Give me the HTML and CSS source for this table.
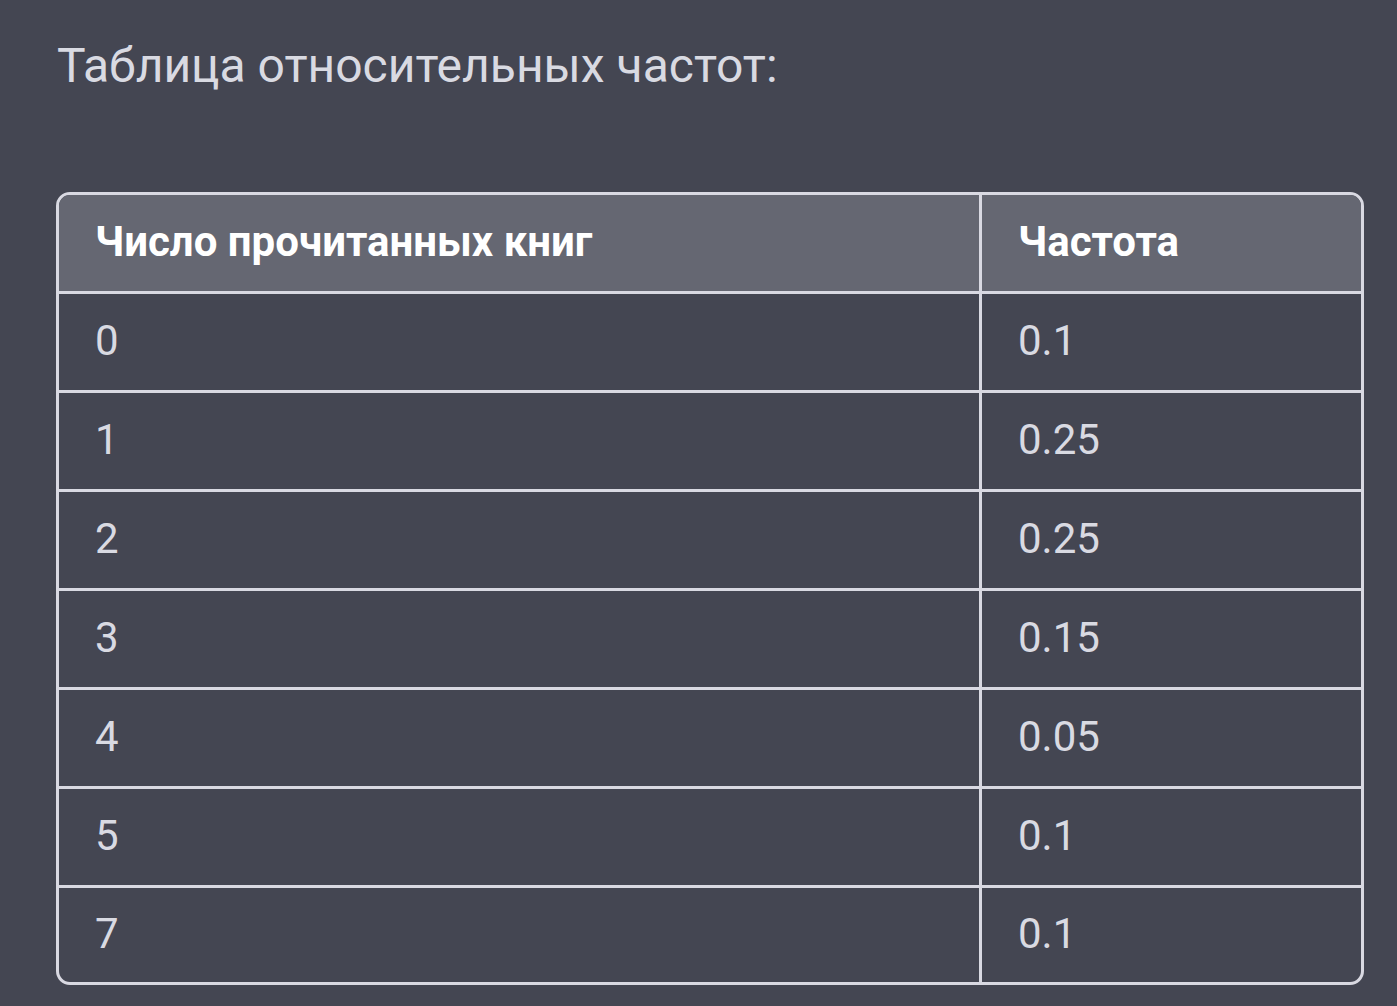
FILE: index.html
```html
<!DOCTYPE html>
<html lang="ru">
<head>
<meta charset="utf-8">
<link rel="stylesheet" href="styles.css">
</head>
<body>
<div class="page">
  <p class="title">Таблица относительных частот:</p>
  <div class="table-wrap">
    <table class="freq">
      <thead>
        <tr><th class="c1">Число прочитанных книг</th><th class="c2">Частота</th></tr>
      </thead>
      <tbody>
        <tr><td class="c1">0</td><td class="c2">0.1</td></tr>
        <tr><td class="c1">1</td><td class="c2">0.25</td></tr>
        <tr><td class="c1">2</td><td class="c2">0.25</td></tr>
        <tr><td class="c1">3</td><td class="c2">0.15</td></tr>
        <tr><td class="c1">4</td><td class="c2">0.05</td></tr>
        <tr><td class="c1">5</td><td class="c2">0.1</td></tr>
        <tr><td class="c1">7</td><td class="c2">0.1</td></tr>
      </tbody>
    </table>
  </div>
</div>
</body>
</html>
```

FILE: styles.css
```css
html, body {
  margin: 0;
  padding: 0;
  background: #444652;
  height: 100%;
}
.page {
  font-family: Roboto, "Noto Sans", sans-serif;
  color: #d9dae2;
  padding: 0 33px 0 56px;
}
.title {
  margin: 0;
  padding-top: 36px;
  padding-left: 1px;
  font-size: 48px;
  line-height: 60px;
  height: 156px;
}
.table-wrap {
  border: 3px solid #d9d9e2;
  border-radius: 14px;
  overflow: hidden;
}
.freq {
  width: 100%;
  border-collapse: collapse;
  table-layout: fixed;
}
.freq th, .freq td {
  height: 93px;
  padding: 0 0 3px 36px;
  text-align: left;
  font-size: 42px;
  border-bottom: 3px solid #d9d9e2;
}
.freq th {
  background: #656772;
  color: #ffffff;
  font-weight: 700;
}
.freq td {
  color: #d9dae2;
  font-weight: 400;
}
.freq tbody tr:last-child td {
  border-bottom: none;
  height: 91px;
}
.freq .c1 {
  width: 884px;
  border-right: 3px solid #d9d9e2;
}
```
